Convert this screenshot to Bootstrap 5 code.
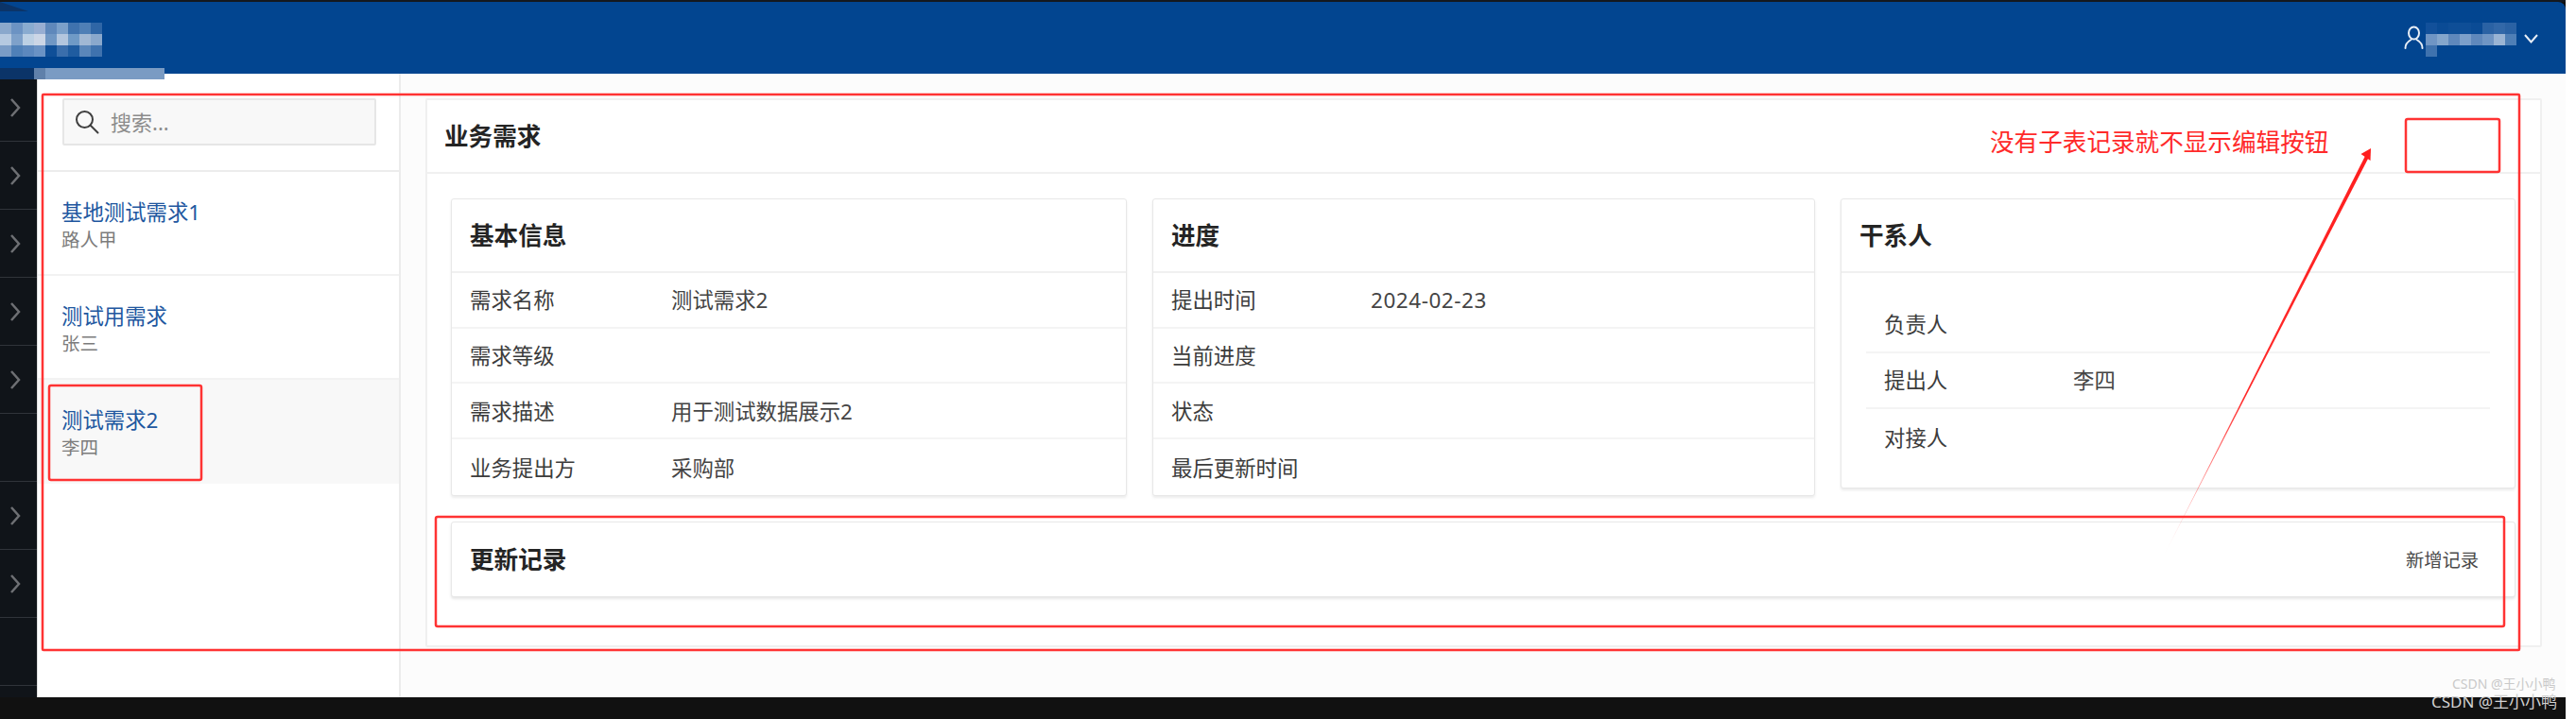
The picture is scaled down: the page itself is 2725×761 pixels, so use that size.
<!DOCTYPE html>
<html lang="zh-CN">

<head>
    <meta charset="UTF-8" />
    <meta name="viewport" content="width=device-width, initial-scale=1" />
    <title>业务需求</title>
    <link href="https://cdn.jsdelivr.net/npm/bootstrap@5.3.0/dist/css/bootstrap.min.css" rel="stylesheet" />
    <style>
        html, body {
            height: 761px;
            overflow: hidden;
        }

        body {
            position: relative;
            background: #fff;
            font-family: "Noto Sans", "Noto Sans CJK SC", sans-serif;
            color: #444;
        }

        .app-shell {
            width: 2714px;
            height: 761px;
            background: #111;
        }

        .top-edge {
            height: 2px;
            background: #14181f;
        }

        .app-head {
            height: 76px;
            padding-top: 22px;
            background: #024590;
            border-top-right-radius: 8px;
        }

        .user-menu {
            margin-right: 26px;
        }

        .app-main {
            height: 660px;
        }

        .dark-rail {
            width: 39px;
            background: #101419;
        }

        .rail-row {
            height: 72px;
            border-bottom: 1px solid #30343a;
            padding-left: 10px;
        }

        .side-panel {
            width: 385px;
            background: #fff;
            border-left: 1px solid #ddd;
            border-right: 2px solid #ececec;
        }

        .search-zone {
            height: 104px;
            padding: 26px 24px 0 26px;
            border-bottom: 2px solid #ececec;
        }

        .search-box {
            height: 50px;
            padding-left: 11px;
            gap: 12px;
            background: #f8f8f8;
            border: 2px solid #e6e6e6;
            border-radius: 2px;
        }

        .search-box .form-control {
            padding: 0;
            border: 0;
            background: transparent;
            font-size: 22px;
            box-shadow: none;
        }

        .search-box .form-control::placeholder {
            color: #8c8c8c;
        }

        .side-panel .list-group-item {
            height: 110px;
            padding: 28px 0 0 25px;
            border-bottom: 2px solid #f2f2f2;
        }

        .side-panel .list-group-item.picked {
            background: #f8f8f8;
            border-bottom: 0;
        }

        .req-title {
            display: block;
            color: #21579f;
            font-size: 22.4px;
            line-height: 30px;
            text-decoration: none;
        }

        .req-owner {
            color: #7c7c7c;
            font-size: 19.5px;
            line-height: 28px;
        }

        .work-area {
            background: #fcfcfc;
            padding: 26px 25px 0 26px;
        }

        .req-panel {
            height: 581px;
            background: #fff;
            border: 2px solid #f0f0f0;
            border-radius: 2px;
        }

        .req-panel-head {
            height: 78px;
            padding: 2px 0 0 18px;
            border-bottom: 2px solid #f0f0f0;
        }

        .block-title {
            margin: 0;
            color: #242424;
            font-size: 25.6px;
            font-weight: 700;
        }

        .req-panel-body {
            padding: 26px 26px 0 25px;
        }

        .info-cols {
            display: grid;
            grid-template-columns: 715px 701px 1fr;
            column-gap: 27px;
        }

        .info-card {
            height: 315px;
            border: 1px solid #e8e8e8;
            border-radius: 3px;
            box-shadow: 0 2px 3px rgba(0, 0, 0, .08);
        }

        .info-card.short-card {
            height: 307px;
        }

        .info-card .card-header {
            display: flex;
            align-items: center;
            height: 78px;
            padding: 2px 0 0 19px;
            background: #fff;
            border-bottom: 2px solid #f0f0f0;
        }

        .info-row {
            display: flex;
            align-items: center;
            height: 59px;
            padding: 2px 0 0 19px;
            font-size: 22.4px;
            border-bottom: 2px solid #f4f4f4;
        }

        .info-row:last-child {
            border-bottom: 0;
        }

        .row-label {
            width: 213px;
            color: #3c3c3c;
        }

        .date-label {
            width: 211px;
        }

        .date-value {
            letter-spacing: .6px;
        }

        .people-list {
            padding: 25px 26px 0;
        }

        .people-list .info-row {
            height: 59.5px;
        }

        .people-list .row-label {
            width: 200px;
        }

        .log-card {
            height: 80px;
            margin-top: 27px;
            padding: 2px 38px 0 19px;
            border: 1px solid #e8e8e8;
            border-radius: 3px;
            box-shadow: 0 2px 3px rgba(0, 0, 0, .1);
        }

        .add-log {
            color: #4a4a4a;
            font-size: 19.3px;
        }

        /* hand drawn notes and mosaics that sit on top of the page */
        .note-layer {
            position: absolute;
            left: 0;
            top: 0;
            pointer-events: none;
        }

        .note-text {
            position: absolute;
            left: 2105px;
            top: 131px;
            color: #ff2a2a;
            font-size: 25.6px;
            line-height: 40px;
            white-space: nowrap;
        }

        .mark-light,
        .mark-dark {
            position: absolute;
            white-space: nowrap;
        }

        .mark-light {
            left: 2594px;
            top: 713px;
            color: #c9c9c9;
            font-size: 14px;
            line-height: 22px;
        }

        .mark-dark {
            left: 2572px;
            top: 731px;
            color: #d2d2d2;
            font-size: 17px;
            line-height: 24px;
        }
    </style>
</head>

<body>
    <div class="app-shell d-flex flex-column">
        <div class="top-edge"></div>

        <header class="app-head d-flex justify-content-between align-items-start">
            <svg width="108" height="36" viewBox="0 0 108 36" aria-hidden="true">
                <g id="logoCells"></g>
            </svg>
            <div class="user-menu d-flex align-items-start">
                <svg width="23" height="36" viewBox="0 0 23 36" fill="none" stroke="#e8eef6" stroke-width="2" aria-hidden="true">
                    <ellipse cx="10.500" cy="11" rx="5.500" ry="6.500" />
                    <path d="M1.500 27c0-5 2.500-7 6-9M19.500 27c0-5-2.500-7-6-9" stroke-linecap="round" />
                </svg>
                <svg width="96" height="36" viewBox="0 0 96 36" aria-hidden="true">
                    <g id="nameCells"></g>
                </svg>
                <svg class="ms-2" width="18" height="36" viewBox="0 0 18 36" fill="none" stroke="#e8eef6" stroke-width="2" aria-hidden="true">
                    <path d="M1 13l6.500 7.500L14 13" />
                </svg>
            </div>
        </header>

        <div class="app-main d-flex">
            <div class="dark-rail flex-shrink-0" id="rail"></div>

            <aside class="side-panel flex-shrink-0">
                <div class="search-zone">
                    <div class="search-box d-flex align-items-center">
                        <svg class="flex-shrink-0" width="26" height="26" viewBox="0 0 26 26" fill="none" stroke="#3f3f3f" stroke-width="2" aria-hidden="true">
                            <circle cx="10.500" cy="10.500" r="8.500" />
                            <path d="M16.500 16.500l8 8" stroke-linecap="round" />
                        </svg>
                        <input class="form-control" type="text" placeholder="搜索..." />
                    </div>
                </div>
                <div class="list-group list-group-flush">
                    <div class="list-group-item">
                        <a class="req-title" href="#">基地测试需求1</a>
                        <div class="req-owner">路人甲</div>
                    </div>
                    <div class="list-group-item">
                        <a class="req-title" href="#">测试用需求</a>
                        <div class="req-owner">张三</div>
                    </div>
                    <div class="list-group-item picked">
                        <a class="req-title" href="#">测试需求2</a>
                        <div class="req-owner">李四</div>
                    </div>
                </div>
            </aside>

            <main class="work-area flex-grow-1">
                <section class="req-panel">
                    <div class="req-panel-head d-flex align-items-center">
                        <h2 class="block-title">业务需求</h2>
                    </div>
                    <div class="req-panel-body">
                        <div class="info-cols">
                            <div class="card info-card">
                                <div class="card-header">
                                    <h3 class="block-title">基本信息</h3>
                                </div>
                                <div class="info-row"><span class="row-label">需求名称</span><span>测试需求2</span></div>
                                <div class="info-row"><span class="row-label">需求等级</span></div>
                                <div class="info-row"><span class="row-label">需求描述</span><span>用于测试数据展示2</span></div>
                                <div class="info-row"><span class="row-label">业务提出方</span><span>采购部</span></div>
                            </div>
                            <div class="card info-card">
                                <div class="card-header">
                                    <h3 class="block-title">进度</h3>
                                </div>
                                <div class="info-row"><span class="row-label date-label">提出时间</span><span class="date-value">2024-02-23</span></div>
                                <div class="info-row"><span class="row-label">当前进度</span></div>
                                <div class="info-row"><span class="row-label">状态</span></div>
                                <div class="info-row"><span class="row-label">最后更新时间</span></div>
                            </div>
                            <div class="card info-card short-card">
                                <div class="card-header">
                                    <h3 class="block-title">干系人</h3>
                                </div>
                                <div class="people-list">
                                    <div class="info-row"><span class="row-label">负责人</span></div>
                                    <div class="info-row"><span class="row-label">提出人</span><span>李四</span></div>
                                    <div class="info-row"><span class="row-label">对接人</span></div>
                                </div>
                            </div>
                        </div>
                        <div class="card log-card flex-row align-items-center justify-content-between">
                            <h3 class="block-title">更新记录</h3>
                            <span class="add-log">新增记录</span>
                        </div>
                    </div>
                </section>
            </main>
        </div>

        <div class="flex-grow-1"></div>
    </div>

    <svg class="note-layer" width="2725" height="761" viewBox="0 0 2725 761" fill="none" aria-hidden="true">
        <defs>
            <linearGradient id="arrowFade" gradientUnits="userSpaceOnUse" x1="2504" y1="165" x2="2288" y2="590">
                <stop offset="0" stop-color="#ff1f1f" />
                <stop offset=".6" stop-color="#ff2a2a" />
                <stop offset=".8" stop-color="#ff3a3a" stop-opacity=".6" />
                <stop offset="1" stop-color="#ff3a3a" stop-opacity="0" />
            </linearGradient>
        </defs>
        <polygon points="0,2 30,12 0,12" fill="#0b3468" />
        <rect x="0" y="72" width="36" height="12" fill="#0b3468" />
        <rect x="36" y="72" width="12" height="12" fill="#5f80aa" />
        <rect x="48" y="72" width="126" height="12" fill="#7a9bc3" />

        <g stroke="#ff3333" stroke-width="2.500">
            <rect x="45" y="100" width="2620" height="588" rx="1" />
            <rect x="52" y="408" width="161" height="100" rx="2" />
            <rect x="2545" y="126" width="99" height="56" rx="2" />
            <rect x="461" y="547" width="2188" height="116" rx="2" />
        </g>

        <polygon points="2502,165 2505.500,167 2288,590" fill="url(#arrowFade)" />
        <polygon points="2508,157 2507.500,170 2497.500,163" fill="#ff1f1f" />
    </svg>

    <div class="note-text">没有子表记录就不显示编辑按钮</div>
    <div class="mark-light">CSDN @王小小鸭</div>
    <div class="mark-dark">CSDN @王小小鸭</div>

    <script>
        // mosaic blocks that hide the logo and user name in the screenshot
        function fillCells(id, rows) {
            const group = document.getElementById(id);
            let html = '';
            rows.forEach((row, y) => {
                row.forEach((color, x) => {
                    if (color) {
                        html += `<rect x="${x * 12}" y="${y * 12}" width="12" height="12" fill="${color}"/>`;
                    }
                });
            });
            group.innerHTML = html;
        }

        fillCells('logoCells', [
            ['#8aa8cc', '#6c93c3', '#89abd0', '#98aed2', '#5f88bb', '#7ba0ca', '#3f72ae', '#4f7fb6', '#2f66a6'],
            ['#b5c9e0', '#7ea1ca', '#bcd0e4', '#ccd6e6', '#7097c4', '#b3c6de', '#6f9ac6', '#a1b8d4', '#8aa8cc'],
            ['#7a9cc6', '#4f80b8', '#5c88be', '#6a92c4', '#0f4f98', '#3a6eac', '#1f5ca0', '#5a86ba', '#3f72ae']
        ]);

        fillCells('nameCells', [
            ['#12509a', '#0a4b95', '#0e4e97', '#0e4e97', '#0a4b95', '#2a62a4', '#3268a8', '#2a62a4'],
            ['#6f95c4', '#84a6cc', '#5f88bc', '#7c9fca', '#5f88bc', '#6f95c4', '#9ab4d4', '#4f7fb6'],
            ['#3f72ae', null, null, null, null, null, null, null]
        ]);

        // left rail: slots 5 and 8 have no arrow
        const rail = document.getElementById('rail');
        for (let i = 0; i < 9; i++) {
            const arrow = (i === 5 || i === 8) ? '' :
                '<svg width="12" height="22" viewBox="0 0 12 22" fill="none" stroke="#6e7074" stroke-width="2.500"><path d="M2 2l8 9-8 9"/></svg>';
            rail.innerHTML += `<div class="rail-row d-flex align-items-center">${arrow}</div>`;
        }
    </script>
</body>

</html>
